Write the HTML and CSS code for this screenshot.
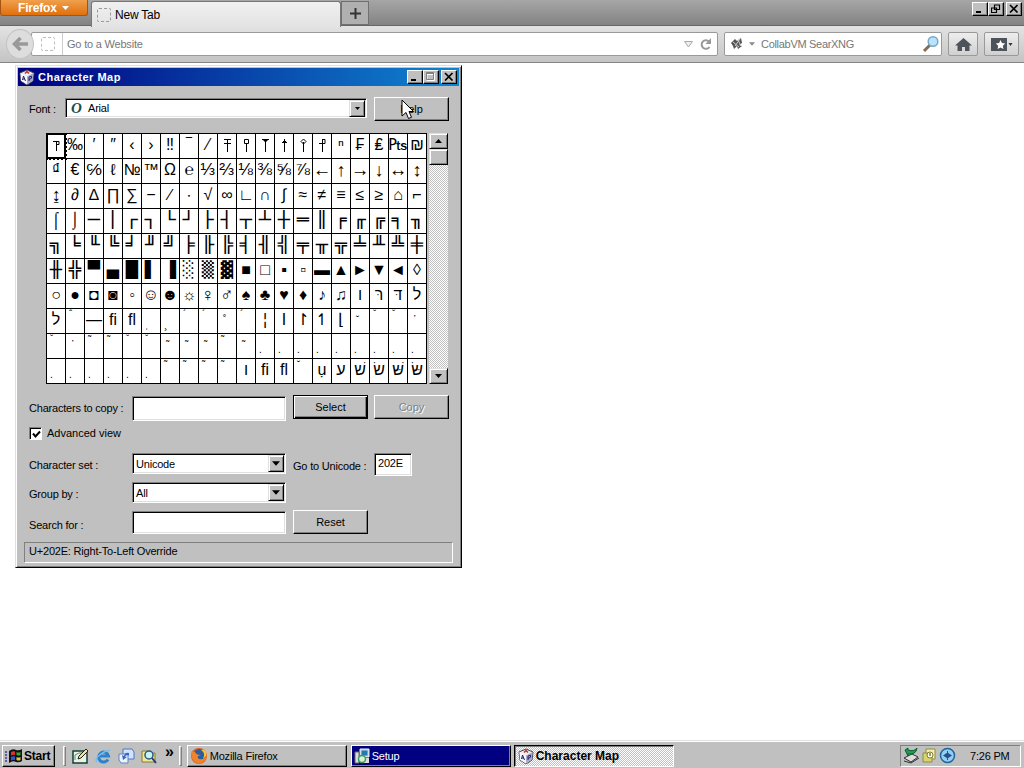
FILE: index.html
```
<!DOCTYPE html>
<html lang="en">
<head>
    <meta charset="UTF-8">
    <title>Character Map</title>
    <link rel="stylesheet" href="styles.css">
</head>
<body>
    <svg class="defs" width="0" height="0">
        <symbol id="icon-charmap" viewBox="0 0 16 16">
            <path d="M8 1l7 3-1 8-6 4-6-4L1 4z" fill="#eee" stroke="#445" stroke-width="1"/>
            <path d="M8 7.500l6.500-3.500-.8 7.800L8 15.500z" fill="#a9a9c8"/>
            <path d="M1.500 4L8 7.500v8L2 11.800z" fill="#f6f6ff"/>
            <path d="M6 4.500l2-2 2 2" stroke="#b33" fill="none" stroke-width="1.500"/>
            <path d="M3.500 11l1-4 2 5M4 10h2" stroke="#226" fill="none"/>
            <path d="M10 12V8l2.500-.8v2L10 10.500" stroke="#226" fill="none"/>
        </symbol>
        <symbol id="arrow-down" viewBox="0 0 7 4"><path d="M0 0h7L3.500 4z"/></symbol>
    </svg>

    <div class="browser">
        <div class="tab-bar">
            <div class="firefox-button">Firefox <svg width="7" height="4" fill="#fff"><use href="#arrow-down"/></svg></div>
            <div class="tab"><span class="blank-icon"></span>New Tab</div>
            <div class="new-tab"><svg width="11" height="11"><path d="M5.500 0v11M0 5.500h11" stroke="#333" stroke-width="2"/></svg></div>
            <div class="window-buttons">
                <span class="win-btn"><svg width="10" height="9"><path d="M1 7h5v2H1z"/></svg></span>
                <span class="win-btn"><svg width="10" height="9"><path d="M3.500 1v4.500h5V1zM3 1h6M.5 4v4.500h5V4zM0 4h6" fill="#c0c0c0" stroke="#000" stroke-width="1.200"/></svg></span>
                <span class="win-btn close"><svg width="10" height="9"><path d="M1 1l7.500 7.500M8.500 1L1 8.500" stroke="#000" stroke-width="1.700"/></svg></span>
            </div>
        </div>
        <div class="toolbar">
            <div class="back"><svg width="17" height="16"><path d="M8.500 2L2.500 8l6 6M3 8h13" fill="none" stroke="#999" stroke-width="3.500"/></svg></div>
            <div class="url-bar">
                <span class="blank-icon"></span>
                <span class="url-text">Go to a Website</span>
                <svg width="9" height="7"><path d="M.5.500h8L4.500 6z" fill="#eee" stroke="#aaa"/></svg>
                <svg class="reload" width="13" height="13"><path d="M10 3.500A4.300 4.300 0 1 0 10.500 9" fill="none" stroke="#999" stroke-width="2"/><path d="M12 0v6H6.500z" fill="#999"/></svg>
            </div>
            <div class="search-bar">
                <svg width="14" height="14"><path d="M1 6l4-4 2 2 4-3 1 5-3 2 3 1-4 3-1-3-3 3-1-3z" fill="#555"/><path d="M3 5l6 5M5 9l5-7M8 3l3 6" stroke="#ccc"/></svg>
                <svg width="6" height="4" fill="#888"><use href="#arrow-down"/></svg>
                <span class="search-text">CollabVM SearXNG</span>
                <svg width="18" height="18"><path d="M2 16l6-6" stroke="#8b6b4d" stroke-width="3"/><circle cx="11" cy="6.500" r="4.800" fill="#b8e3f8" stroke="#75a8cb" stroke-width="1.500"/></svg>
            </div>
            <div class="tool-button"><svg width="17" height="15"><path d="M8.500 1L0 8.500h2.500V14h4.500v-4h3v4h4.500V8.500H17z" fill="#4d535a"/></svg></div>
            <div class="tool-button bookmarks"><svg width="22" height="15"><path d="M0 1h16v13H0z" fill="#4d535a"/><path d="M9.500 3l1.400 3 3.300.4-2.400 2.300.6 3.300-2.900-1.600L6.600 12l.6-3.300-2.400-2.300 3.300-.4z" fill="#fff"/><path d="M17.500 6h4l-2 3z" fill="#333"/></svg></div>
        </div>
    </div>

    <div class="window">
        <div class="title-bar">
            <svg width="16" height="16"><use href="#icon-charmap"/></svg>
            <span class="title">Character Map</span>
            <span class="win-btn"><svg width="10" height="9"><path d="M1 7h5v2H1z"/></svg></span>
            <span class="win-btn"><svg width="10" height="9"><path d="M1 1.500h7.500v7H1zM1 2.500h8" fill="none" stroke="#fff"/><path d="M.5.500h7v7h-7zM0 1.500h8" fill="none" stroke="#808080"/></svg></span>
            <span class="win-btn close"><svg width="10" height="9"><path d="M1 1l7.500 7.500M8.500 1L1 8.500" stroke="#000" stroke-width="1.700"/></svg></span>
        </div>
        <div class="row font-row">
            <label>Font :</label>
            <div class="combo font-combo"><i>O</i><span>Arial</span><b><svg width="5" height="3"><use href="#arrow-down"/></svg></b></div>
            <button>Help</button>
        </div>
        <div class="row map-row">
            <div class="char-grid"></div>
            <div class="scrollbar">
                <b><svg class="up" width="7" height="4"><use href="#arrow-down"/></svg></b>
                <b class="thumb"></b>
                <b class="bottom"><svg width="7" height="4"><use href="#arrow-down"/></svg></b>
            </div>
        </div>
        <div class="row copy-row">
            <label>Characters to copy :</label>
            <div class="field"></div>
            <button class="default">Select</button>
            <button class="disabled">Copy</button>
        </div>
        <div class="row check-row">
            <span class="checkbox"><svg width="9" height="9"><path d="M1 3.500l2.500 3L8 1.500" fill="none" stroke="#000" stroke-width="2"/></svg></span>
            Advanced view
        </div>
        <div class="row set-row">
            <label>Character set :</label>
            <div class="combo"><span>Unicode</span><b><svg width="8" height="5"><use href="#arrow-down"/></svg></b></div>
            <span class="goto">Go to Unicode :</span>
            <div class="field code">202E</div>
        </div>
        <div class="row group-row">
            <label>Group by :</label>
            <div class="combo"><span>All</span><b><svg width="8" height="5"><use href="#arrow-down"/></svg></b></div>
        </div>
        <div class="row search-row">
            <label>Search for :</label>
            <div class="field"></div>
            <button>Reset</button>
        </div>
        <div class="status">U+202E: Right-To-Left Override</div>
    </div>

    <svg class="cursor" width="13" height="21"><path d="M1 1v16l4-3.500 2.500 6 3-1.200L8 12.500h4.500z" fill="#fff" stroke="#000"/></svg>

    <div class="taskbar">
        <div class="start">
            <svg width="18" height="16"><path d="M0 4h3M0 7h3M0 10h3M0 13h3" stroke="#404090" stroke-width="1.500" stroke-dasharray="2 1"/><path d="M4 3q4-3 7-1 3 1 6-1v12q-3 2-6 1-3-2-7 1z" fill="#111"/><path d="M6 4q2-1 4-.5v3.500q-2-.5-4 .5z" fill="#d33"/><path d="M11.500 4q2 1 4 0v3q-2 1-4 0z" fill="#3a3"/><path d="M6 9q2-1 4-.5V12q-2-.5-4 .5z" fill="#35d"/><path d="M11.500 9q2 1 4 0v3q-2 1-4 0z" fill="#dc3"/></svg>
            Start
        </div>
        <div class="grip"></div>
        <div class="quick-launch">
            <svg width="17" height="16"><path d="M1 3h14v12H1z" fill="#e8f3e4" stroke="#153f3a" stroke-width="1.500"/><path d="M3 12V7l4-2h4" fill="none" stroke="#4b9186"/><path d="M6 11l1-3 7-7 2 2-7 7z" fill="#f6e28b" stroke="#222"/></svg>
            <svg width="17" height="16"><path d="M13 11.500A5 5 0 1 1 13.500 8H4" fill="none" stroke="#2b83cf" stroke-width="3"/><path d="M2 14Q-1 11 6 6t9-3" fill="none" stroke="#79bdf0" stroke-width="1.500"/></svg>
            <svg width="17" height="16"><path d="M5 1h9l2 3v7H5z" fill="#cfe2ff" stroke="#5377bd"/><path d="M1 6h9v9H3l-2-3z" fill="#e9f2ff" stroke="#6684bd"/><path d="M11 5q-4-1-5 3l-2-1 1 5 4-3-2-.5q1-2 4-1z" fill="#3a67c2"/></svg>
            <svg width="17" height="16"><path d="M1 3h5l1 2h7v9H1z" fill="#f4e690" stroke="#887b32"/><circle cx="8" cy="7" r="4" fill="#c8f2fa" stroke="#245b78" stroke-width="1.500"/><path d="M11 10l4 5" stroke="#223b80" stroke-width="2"/></svg>
        </div>
        <div class="more">»</div>
        <div class="grip second"></div>
        <div class="task">
            <svg width="18" height="18"><circle cx="9" cy="9" r="8" fill="#dc5b18"/><circle cx="9.500" cy="7.500" r="5.500" fill="#2b5c9b"/><path d="M1.500 4Q0 14 8 16.500q8 0 9-9-3 6-8 4.500-2-1-1-3l3-1Q6 8 5 5z" fill="#ef842c"/><path d="M11 3q5 3 2 8 4-1 3.500-6-2-3-5.500-2" fill="#f5c04e"/></svg>
            Mozilla Firefox
        </div>
        <div class="task flash">
            <svg width="16" height="16"><path d="M6 1h9v8H6z" fill="#b8d4dc" stroke="#eee"/><path d="M7.500 2.500h6v5h-6z" fill="#2379b4"/><path d="M1 4h4v11H1z" fill="#dcdcdc" stroke="#666"/><path d="M6 10h9v5H6z" fill="#ddd"/><circle cx="8" cy="11" r="3.500" fill="#d8f2d5" stroke="#399b62" stroke-width="1.500"/></svg>
            Setup
        </div>
        <div class="task active">
            <svg width="16" height="16"><use href="#icon-charmap"/></svg>
            Character Map
        </div>
        <div class="tray">
            <svg width="17" height="17"><path d="M1 11l8-4 6 3-7 5z" fill="#ddd" stroke="#333"/><path d="M1 14l7 2 8-5" fill="none" stroke="#333"/><path d="M2 3l3-2v2q6 2 9-2-1 7-9 6v2z" fill="#16a34a" stroke="#0b5a31"/></svg>
            <svg width="15" height="16"><path d="M4 1h9v10H4z" fill="#f5edaa" stroke="#8c8c45"/><path d="M1 5h9v9H1z" fill="#d9d36b" stroke="#8c8c45"/><circle cx="8" cy="7" r="3" fill="#fffbe0" stroke="#7d7d32"/><path d="M8 5v3" stroke="#333"/></svg>
            <svg width="17" height="17"><circle cx="8.500" cy="8.500" r="7" fill="#8fd0f0" stroke="#24629b" stroke-width="1.500"/><path d="M4 8.500l4.500-3 4.500 3-4.500 3z" fill="#284d95"/><path d="M8.500 4v9" stroke="#284d95"/></svg>
            <span>7:26 PM</span>
        </div>
    </div>

    <script>
        const grid = document.querySelector('.char-grid');

        // control characters are shown as little flag poles
        const poles = {
            A: 'M4.500 3v10M1 3.500h6v3H4',
            B: 'M4.500 1v13M1 1.500h7M1 5.500h7',
            C: 'M4.500 5v9M2.500 1.500h4v4h-4z',
            D: 'M4.500 1v13M1 1.500h7M2.500 2.500h4M3.500 3.500h2',
            E: 'M4.500 1v13M2 4.500h5M3 3.500h3',
            F: 'M4.500 4v10M4.500 1l2.500 2.500L4.500 6 2 3.500z',
            G: 'M4.500 1v13M1 5.500h6M4 1.500h3v4'
        };

        const rows = [
            ['#A', '‰', '′', '″', '‹', '›', '‼', '‾', '⁄', '#B', '#C', '#D', '#E', '#F', '#G', 'ⁿ', '₣', '₤', '₧', '₪'],
            [...'₫€℅ℓ№™Ω℮⅓⅔⅛⅜⅝⅞←↑→↓↔↕'],
            [...'↨∂∆∏∑−∕∙√∞∟∩∫≈≠≡≤≥⌂⌐'],
            [...'⌠⌡─│┌┐└┘├┤┬┴┼═║╒╓╔╕╖'],
            [...'╗╘╙╚╛╜╝╞╟╠╡╢╣╤╥╦╧╨╩╪'],
            [...'╫╬▀▄█▌▐░▒▓■□▪▫▬▲►▼◄◊'],
            [...'○●◘◙◦☺☻☼♀♂♠♣♥♦♪♫', 'ו', 'רּ', 'דּ', 'ל'],
            ['ל', '^ˆ', '—', 'ﬁ', 'ﬂ', '_ˌ', '_¸', '^´', '^´', '~˚', '^´', '¦', 'I', '↾', '↿', '⌊', '~˘', '^ˇ', '^ˇ', '~᾽'],
            ['^ˇ', '~᾽', '^˜', '^˜', '^ˇ', '^ˇ', '~˜', '~˜', '~˜', '^˜', '~˜', '_.', '_.', '_.', '_.', '_.', '_.', '_.', '_.', '_.'],
            ['_.', '_.', '_.', '_.', '_.', '_.', '^˜', '^˜', '^˜', '^˜', 'ו', 'ﬁ', 'ﬂ', '^˘', 'ụ', 'ע', 'שׁ', 'שׂ', 'שּׁ', 'שּׂ']
        ];

        const marks = { '^': 'mark-top', '~': 'mark-upper', '_': 'mark-low' };

        rows.forEach(row => {
            row.forEach(ch => {
                const cell = document.createElement('div');
                cell.className = 'cell';
                if (ch[0] === '#') {
                    cell.innerHTML = `<svg width="9" height="15"><path d="${poles[ch[1]]}" fill="none" stroke="#000"/></svg>`;
                } else if (marks[ch[0]]) {
                    cell.classList.add(marks[ch[0]]);
                    cell.textContent = ch.slice(1);
                } else {
                    const glyph = document.createElement('span');
                    glyph.textContent = ch;
                    cell.appendChild(glyph);
                    if (/[\u2500-\u2593]/.test(ch)) cell.classList.add('box');
                    if (/[\u2500-\u254b]/.test(ch)) cell.classList.add('heavy');
                    if (/[\u2153-\u215e₧℅]/.test(ch)) cell.classList.add('wide');
                    if (/[\u2190-\u21a8\u2640-\u2642]/.test(ch)) cell.classList.add('symbol');
                }
                grid.appendChild(cell);
            });
        });
        grid.firstChild.classList.add('selected');
    </script>
</body>
</html>
```
FILE: styles.css
```
* {
    margin: 0;
    padding: 0;
    box-sizing: border-box;
}
body {
    width: 1024px;
    height: 768px;
    overflow: hidden;
    display: flex;
    flex-direction: column;
    font-family: "Liberation Sans", Arial, sans-serif;
    font-size: 11px;
    letter-spacing: -.2px;
    color: #000;
    background-color: #fff;
}
svg {
    display: block;
    flex: none;
}
.defs {
    position: absolute;
}

/* browser */
.browser {
    flex: 1;
}
.tab-bar {
    display: flex;
    align-items: flex-start;
    height: 26px;
    background: linear-gradient(#a6a6a6, #838383);
    border-bottom: 1px solid #666;
}
.firefox-button {
    display: flex;
    align-items: center;
    gap: 5px;
    width: 88px;
    height: 16px;
    padding-left: 17px;
    color: #fff;
    font-size: 12px;
    font-weight: bold;
    background: linear-gradient(#f0a04c, #e0700c);
    border: 1px solid #a85410;
    border-top: none;
    border-radius: 0 0 3px 3px;
}
.tab {
    display: flex;
    align-items: center;
    gap: 4px;
    width: 250px;
    height: 26px;
    margin: 1px 0 0 3px;
    padding-left: 5px;
    font-size: 12px;
    background: linear-gradient(#f0f0f0, #e3e3e3);
    border: 1px solid #777;
    border-bottom: none;
    border-radius: 3px 3px 0 0;
}
.blank-icon {
    width: 14px;
    height: 14px;
    border: 1px dashed #999;
    border-radius: 2px;
}
.new-tab {
    display: flex;
    align-items: center;
    justify-content: center;
    width: 28px;
    height: 24px;
    margin-top: 1px;
    background: #b0b0b0;
    border: 1px solid #707070;
}
.window-buttons {
    display: flex;
    margin: 2px 2px 0 auto;
}
.win-btn {
    display: flex;
    justify-content: center;
    width: 16px;
    height: 14px;
    padding-top: 1px;
    background: #c0c0c0;
    border: 1px solid;
    border-color: #fff #000 #000 #fff;
    box-shadow: inset -1px -1px #808080;
}
.win-btn.close {
    margin-left: 2px;
}
.toolbar {
    display: flex;
    align-items: center;
    height: 37px;
    padding: 0 4px 0 6px;
    background: linear-gradient(#e3e3e3, #c4c4c4);
    border-bottom: 1px solid #858585;
}
.back {
    display: flex;
    align-items: center;
    justify-content: center;
    width: 28px;
    height: 30px;
    background: #ddd;
    border: 1px solid #c2c2c2;
    border-radius: 50%;
    z-index: 1;
}
.url-bar, .search-bar {
    display: flex;
    align-items: center;
    height: 24px;
    background: #fff;
    border: 1px solid #999;
    border-radius: 2px;
    color: #777;
}
.url-bar {
    width: 687px;
    margin-left: -3px;
    padding: 0 5px 0 9px;
}
.url-bar .blank-icon {
    border-color: #bbb;
}
.url-text {
    flex: 1;
    height: 22px;
    margin-left: 7px;
    padding-left: 4px;
    line-height: 23px;
    border-left: 1px solid #ccc;
}
.reload {
    margin-left: 6px;
}
.search-bar {
    width: 218px;
    margin-left: 6px;
    padding: 0 1px 0 5px;
    gap: 5px;
}
.search-text {
    flex: 1;
    margin-left: 1px;
    letter-spacing: -.3px;
}
.tool-button {
    display: flex;
    align-items: center;
    justify-content: center;
    width: 30px;
    height: 24px;
    margin-left: 6px;
    background: linear-gradient(#eee, #d0d0d0);
    border: 1px solid #999;
    border-radius: 2px;
}
.bookmarks {
    width: 35px;
}

/* character map window */
.window {
    position: absolute;
    left: 15px;
    top: 65px;
    width: 447px;
    height: 503px;
    padding: 2px;
    background: #c0c0c0;
    border: 1px solid;
    border-color: #dfdfdf #000 #000 #dfdfdf;
    box-shadow: inset 1px 1px #fff, inset -1px -1px #808080;
}
.title-bar {
    display: flex;
    align-items: center;
    height: 18px;
    padding: 0 2px 0 1px;
    color: #fff;
    background: linear-gradient(to right, #000080, #1084d0);
}
.title {
    flex: 1;
    margin-left: 3px;
    font-weight: bold;
    letter-spacing: .5px;
}
.row {
    display: flex;
    padding-left: 11px;
}
label {
    width: 103px;
    white-space: nowrap;
}
button {
    width: 75px;
    height: 24px;
    margin-left: 7px;
    font-family: inherit;
    font-size: 11px;
    background: #c0c0c0;
    border: 1px solid;
    border-color: #fff #000 #000 #fff;
    box-shadow: inset -1px -1px #808080;
}
button.default {
    border-color: #000;
    box-shadow: inset 1px 1px #fff, inset -1px -1px #000, inset -2px -2px #808080;
}
button.disabled {
    margin-left: 6px;
    color: #808080;
    text-shadow: 1px 1px #fff;
}
.field, .combo {
    width: 154px;
    height: 21px;
    background: #fff;
    border: 1px solid;
    border-color: #808080 #fff #fff #808080;
    box-shadow: inset 1px 1px #000, inset -1px -1px #dfdfdf;
}
.combo {
    display: flex;
    align-items: center;
    padding: 1px 1px 1px 3px;
}
.combo span {
    flex: 1;
}
.combo b, .scrollbar b {
    display: flex;
    align-items: center;
    justify-content: center;
    width: 16px;
    height: 16px;
    background: #c0c0c0;
    border: 1px solid;
    border-color: #dfdfdf #000 #000 #dfdfdf;
    box-shadow: inset 1px 1px #fff, inset -1px -1px #808080;
}
.combo b {
    height: 17px;
}
.font-row {
    height: 24px;
    margin-top: 11px;
}
.font-row label {
    width: 36px;
    padding-top: 6px;
}
.font-combo {
    width: 302px;
    height: 20px;
    margin-top: 1px;
    padding-left: 5px;
}
.font-combo i {
    width: 17px;
    color: #174f4b;
    font: italic bold 15px "Liberation Serif", serif;
}
.map-row {
    margin-top: 12px;
    padding-left: 28px;
}
.char-grid {
    display: grid;
    grid-template-columns: repeat(20, 19px);
    grid-auto-rows: 25px;
    border: solid #000;
    border-width: 1px 0 0 1px;
}
.cell {
    display: flex;
    align-items: center;
    justify-content: center;
    overflow: hidden;
    font-family: "Liberation Sans", "DejaVu Sans", sans-serif;
    font-size: 16px;
    letter-spacing: 0;
    line-height: 22px;
    padding-bottom: 2px;
    background: #fff;
    border: solid #000;
    border-width: 0 1px 1px 0;
}
.box {
    font-family: "DejaVu Sans Mono", monospace;
}
.box span {
    transform: scaleX(1.25);
}
.heavy {
    font-weight: bold;
}
.wide span {
    transform: scaleX(1.1);
}
.symbol span {
    transform: scale(1.15);
}
.mark-top, .mark-upper, .mark-low {
    align-items: flex-start;
    justify-content: flex-start;
    padding-left: 3px;
    font-size: 10px;
    line-height: 12px;
}
.mark-upper {
    padding: 5px 0 0 5px;
}
.mark-low {
    padding-top: 10px;
}
.selected {
    outline: 2px dotted #000;
    outline-offset: -1px;
    box-shadow: inset 1px 1px #000, inset -1px -1px #000;
    z-index: 1;
}
.scrollbar {
    display: flex;
    flex-direction: column;
    width: 19px;
    height: 251px;
    margin-left: 2px;
    background: repeating-conic-gradient(#fff 0 25%, #c0c0c0 0 50%) 0 0 / 2px 2px;
}
.scrollbar b {
    width: 19px;
}
.scrollbar .up {
    transform: rotate(180deg);
}
.scrollbar .bottom {
    margin-top: auto;
}
.copy-row {
    height: 26px;
    margin-top: 11px;
}
.copy-row label {
    padding-top: 7px;
}
.copy-row .field {
    height: 25px;
    margin-top: 1px;
}
.check-row {
    align-items: center;
    height: 14px;
    margin-top: 5px;
    gap: 5px;
    letter-spacing: 0;
}
.checkbox {
    width: 13px;
    height: 13px;
    padding: 2px;
    background: #fff;
    border: 1px solid;
    border-color: #808080 #fff #fff #808080;
    box-shadow: inset 1px 1px #000;
}
.set-row {
    height: 22px;
    margin-top: 13px;
}
.set-row label, .group-row label {
    padding-top: 6px;
}
.goto {
    width: 81px;
    margin: 7px 0 0 7px;
    white-space: nowrap;
}
.code {
    width: 38px;
    height: 23px;
    padding: 3px 0 0 3px;
}
.group-row {
    margin-top: 7px;
}
.search-row {
    height: 24px;
    margin-top: 7px;
}
.search-row label {
    padding-top: 9px;
}
.search-row .field {
    height: 23px;
    margin-top: 1px;
}
.status {
    height: 21px;
    margin: 8px 6px 0 6px;
    padding: 2px 4px;
    border: 1px solid;
    border-color: #808080 #fff #fff #808080;
}
.cursor {
    position: absolute;
    left: 401px;
    top: 99px;
}

/* taskbar */
.taskbar {
    display: flex;
    align-items: center;
    height: 28px;
    padding: 2px 3px 0 2px;
    background: #c0c0c0;
    border-top: 1px solid #dfdfdf;
    box-shadow: inset 0 1px #fff;
}
.start, .task {
    display: flex;
    align-items: center;
    gap: 2px;
    height: 22px;
    border: 1px solid;
    border-color: #fff #000 #000 #fff;
    box-shadow: inset -1px -1px #808080;
}
.start {
    width: 53px;
    padding-left: 2px;
    gap: 1px;
    font-size: 12px;
    font-weight: bold;
}
.grip {
    width: 3px;
    height: 20px;
    margin-left: 8px;
    border: 1px solid;
    border-color: #fff #808080 #808080 #fff;
}
.quick-launch {
    display: flex;
    gap: 6px;
    margin-left: 6px;
}
.more {
    margin: -8px 0 0 7px;
    font-size: 16px;
    font-weight: bold;
}
.grip.second {
    margin-left: 5px;
}
.task {
    width: 160px;
    margin-left: 5px;
    padding-left: 2px;
}
.flash {
    margin-left: 4px;
    color: #fff;
    background: #000080;
}
.active {
    margin-left: 3px;
    padding-left: 3px;
    font-size: 12px;
    font-weight: bold;
    letter-spacing: 0;
    border-color: #000 #fff #fff #000;
    box-shadow: inset 1px 1px #808080;
    background: repeating-conic-gradient(#fff 0 25%, #c0c0c0 0 50%) 0 0 / 2px 2px;
}
.tray {
    display: flex;
    align-items: center;
    width: 121px;
    height: 22px;
    margin-left: auto;
    padding-left: 2px;
    gap: 2px;
    border: 1px solid;
    border-color: #808080 #fff #fff #808080;
}
.tray span {
    margin-left: 12px;
    white-space: nowrap;
}
```
